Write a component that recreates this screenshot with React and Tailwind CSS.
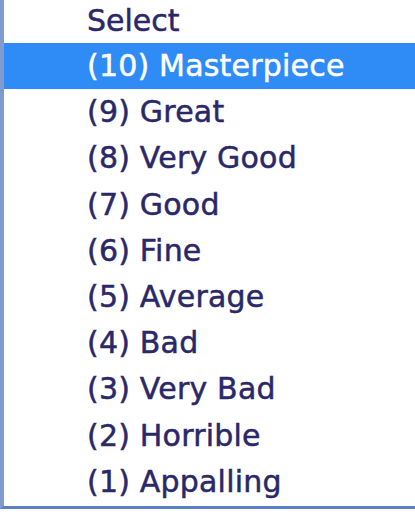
import React from "react";

const options = [
  "(10) Masterpiece",
  "(9) Great",
  "(8) Very Good",
  "(7) Good",
  "(6) Fine",
  "(5) Average",
  "(4) Bad",
  "(3) Very Bad",
  "(2) Horrible",
  "(1) Appalling",
];

export default function App() {
  return (
    <div
      className="w-[415px] h-[512px] overflow-hidden bg-white"
      style={{ fontFamily: '"DejaVu Sans", Verdana, sans-serif' }}
    >
      <div className="h-[509px] border-l-4 border-b-[3px] border-l-[#7f9bd0] border-b-[#5b80c8] bg-white [-webkit-text-stroke:0.5px_currentColor]">
        {/* placeholder row, cut off at the top */}
        <div className="h-[43px] flex items-end pb-[7px] pl-[83px] text-[30px] leading-none text-[#2a2868]">
          Select
        </div>
        {options.map((opt, i) => (
          <div
            key={opt}
            className={`h-[46.2px] flex items-center pl-[83px] text-[30px] leading-none tracking-[0.2px] ${
              i === 0 ? "bg-[#2f8cf7] text-white" : "text-[#2a2868]"
            }`}
          >
            {opt}
          </div>
        ))}
      </div>
    </div>
  );
}
